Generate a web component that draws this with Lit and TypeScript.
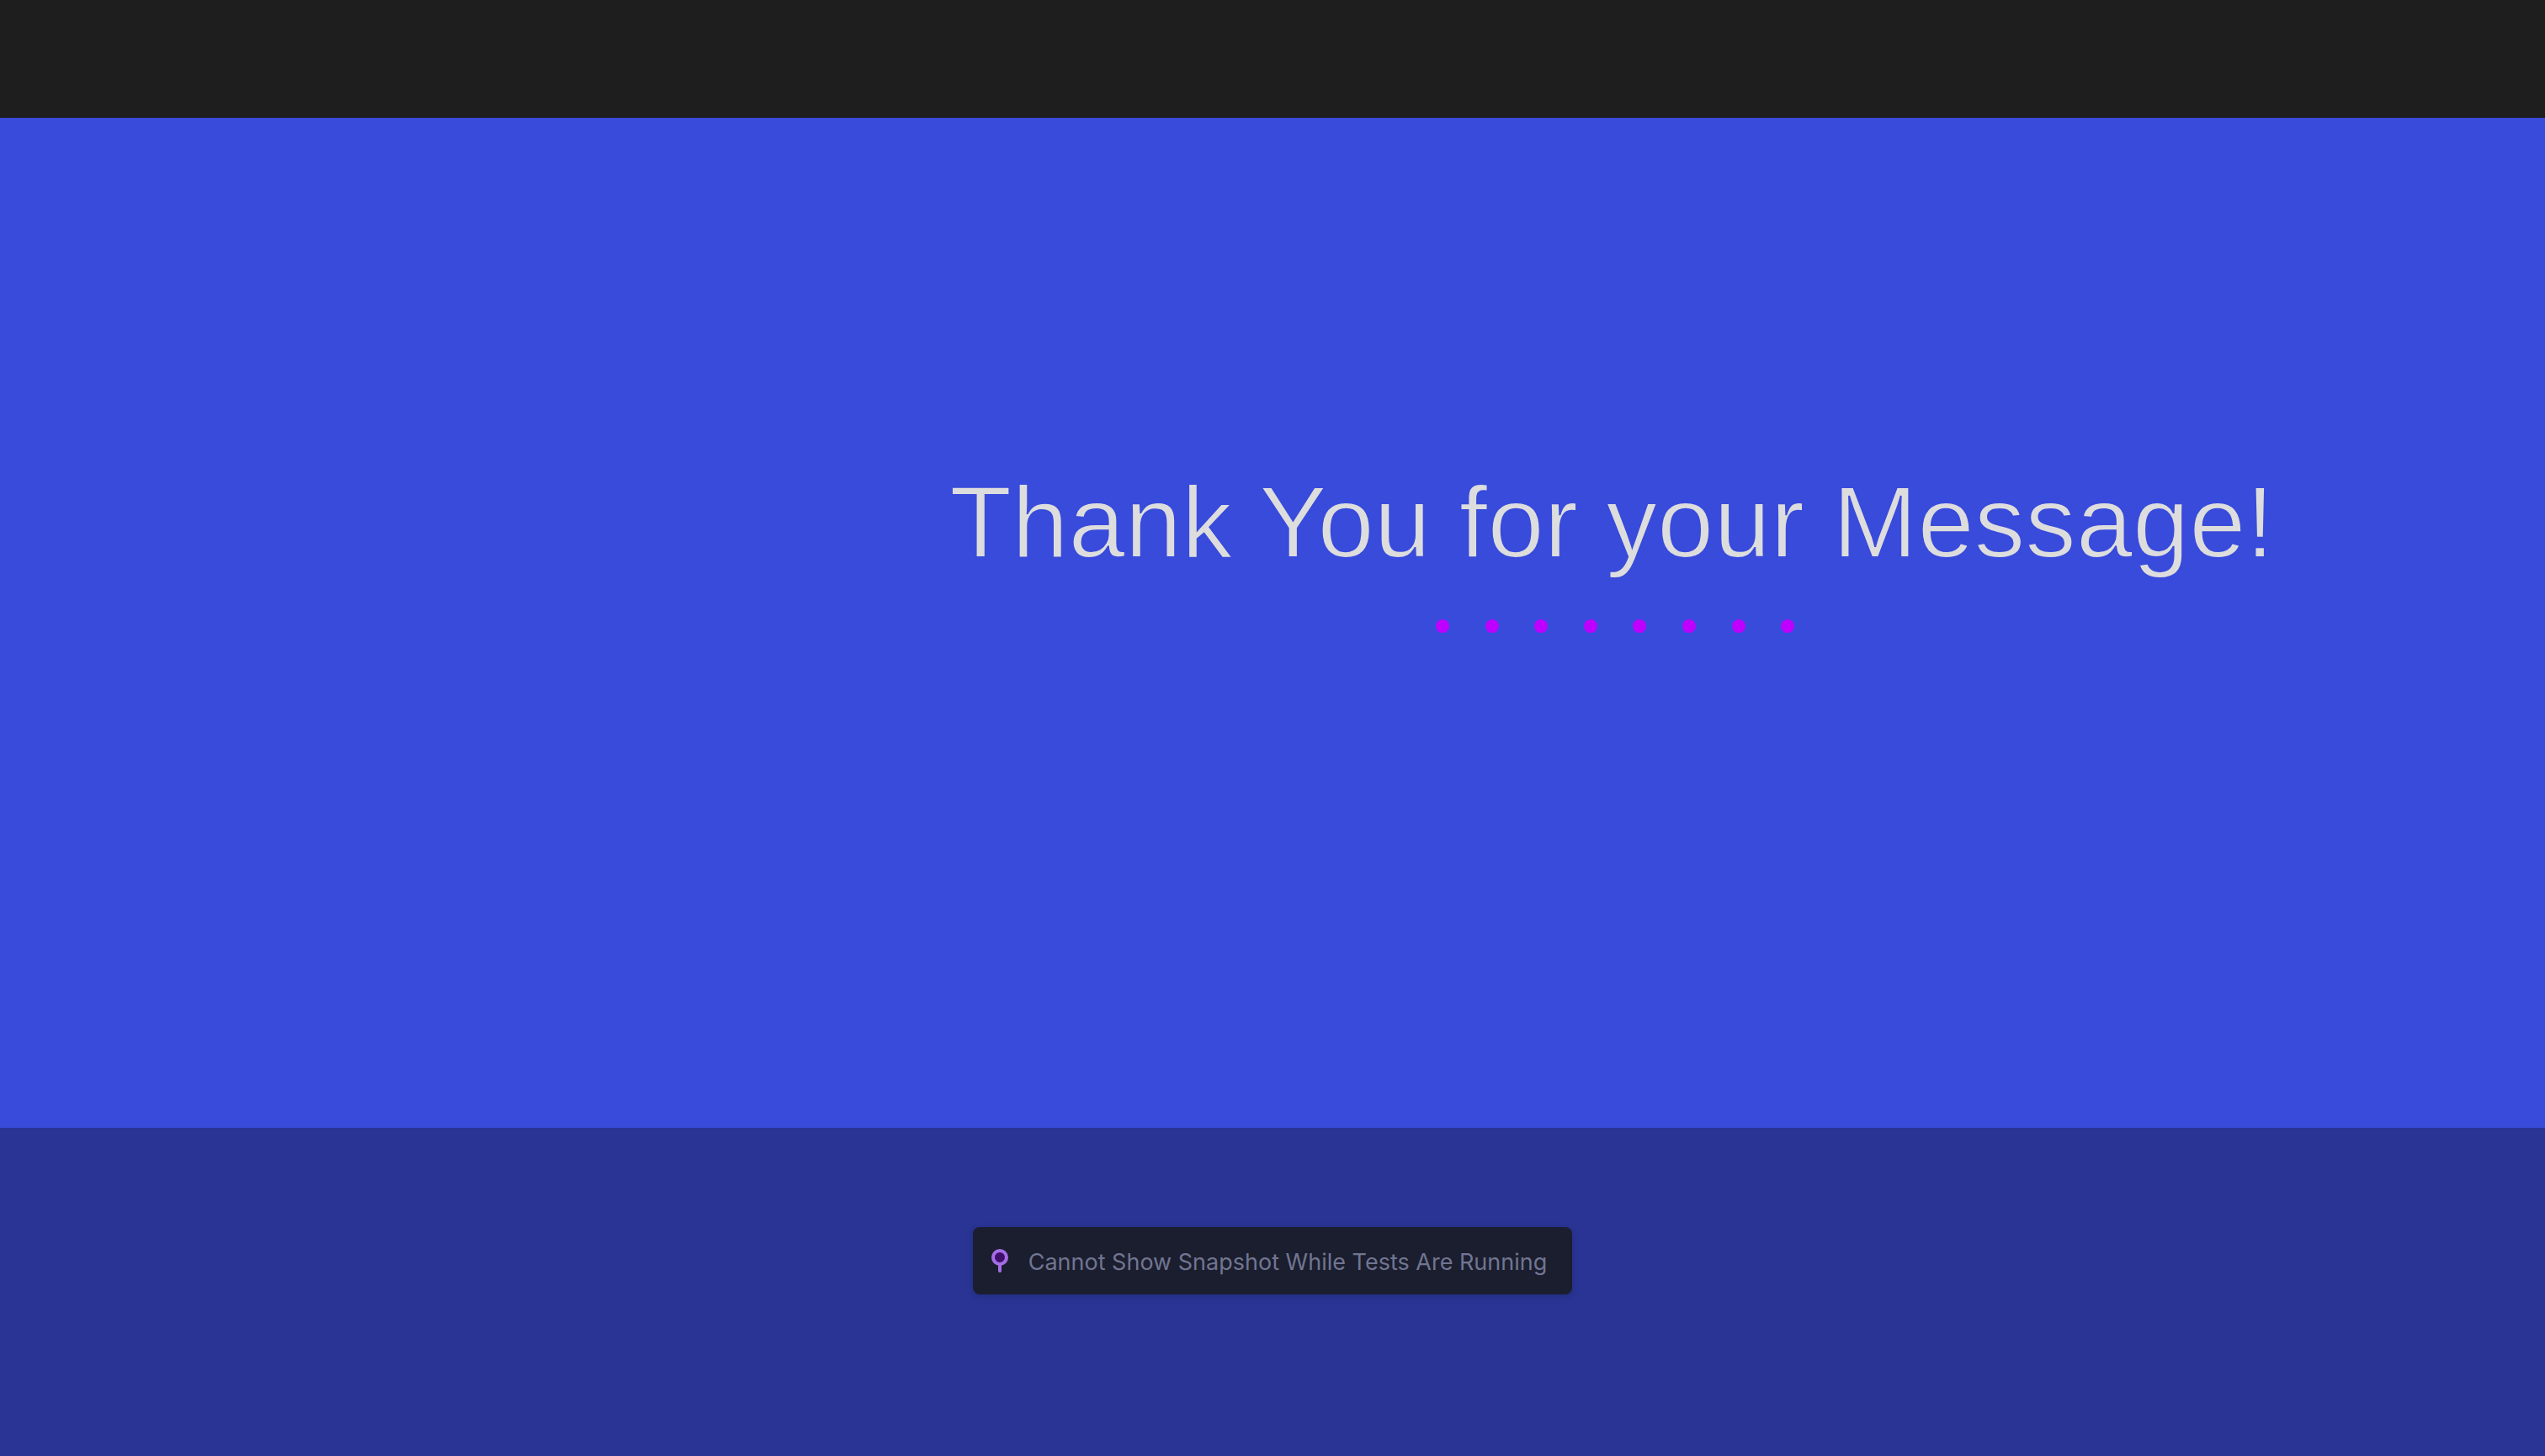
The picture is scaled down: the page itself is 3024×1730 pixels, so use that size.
import { LitElement, html, css } from "lit";
import { customElement } from "lit/decorators.js";

const DOT_COUNT = 8;

@customElement("thank-you-message")
export class ThankYouMessage extends LitElement {
  static styles = css`
    :host {
      display: flex;
      flex-direction: column;
      align-items: center;
      gap: 44px;
    }
    /* A stroke in the surface colour thins the regular weight to a light one. */
    .title {
      margin: 0;
      padding-right: 8px;
      color: #dddddd;
      font-family: "Liberation Sans", sans-serif;
      font-size: 121px;
      font-weight: 400;
      line-height: 144px;
      white-space: nowrap;
      -webkit-text-stroke: 2px #394bdb;
    }
    .dots {
      display: flex;
      justify-content: space-between;
      width: 426px;
      max-width: 100%;
    }
    .dot {
      width: 16px;
      height: 16px;
      border-radius: 50%;
      background: #bf00ff;
    }
  `;

  render() {
    return html`
      <h1 class="title">Thank You for your Message!</h1>
      <div class="dots" aria-hidden="true">
        ${Array.from({ length: DOT_COUNT }, () => html`<span class="dot"></span>`)}
      </div>
    `;
  }
}

@customElement("snapshot-notice")
export class SnapshotNotice extends LitElement {
  static styles = css`
    :host {
      display: block;
    }
    .notice {
      display: flex;
      align-items: center;
      box-sizing: border-box;
      min-height: 80px;
      padding: 0 30px 0 22px;
      gap: 24px;
      border-radius: 8px;
      background: #1b1e2e;
      box-shadow: 0 2px 8px rgba(0, 0, 0, 0.14);
    }
    .pin {
      flex: none;
      width: 20px;
      height: 28px;
    }
    .text {
      margin: 0;
      padding-top: 4px;
      color: #717592;
      font-family: Inter, "Liberation Sans", sans-serif;
      font-size: 27px;
      line-height: 36px;
      white-space: nowrap;
    }
  `;

  render() {
    return html`
      <div class="notice" role="status">
        <svg class="pin" viewBox="0 0 20 28" aria-hidden="true">
          <path d="M10 18V26" stroke="#a56de6" stroke-width="4" stroke-linecap="round" />
          <circle cx="10" cy="10" r="8" fill="#3f0f6b" stroke="#a56de6" stroke-width="4" />
        </svg>
        <p class="text">Cannot Show Snapshot While Tests Are Running</p>
      </div>
    `;
  }
}

@customElement("app-root")
export class AppRoot extends LitElement {
  static styles = css`
    :host {
      display: flex;
      flex-direction: column;
      min-height: 100vh;
    }
    .topbar {
      height: 140px;
      background: #1e1e1e;
    }
    .stage {
      flex: 1;
      padding: 408px 2px 80px 27%;
      background: #394bdb;
    }
    .footer {
      display: flex;
      justify-content: center;
      padding: 118px 0 192px;
      background: #293494;
    }
  `;

  render() {
    return html`
      <header class="topbar"></header>
      <main class="stage"><thank-you-message></thank-you-message></main>
      <footer class="footer"><snapshot-notice></snapshot-notice></footer>
    `;
  }
}
